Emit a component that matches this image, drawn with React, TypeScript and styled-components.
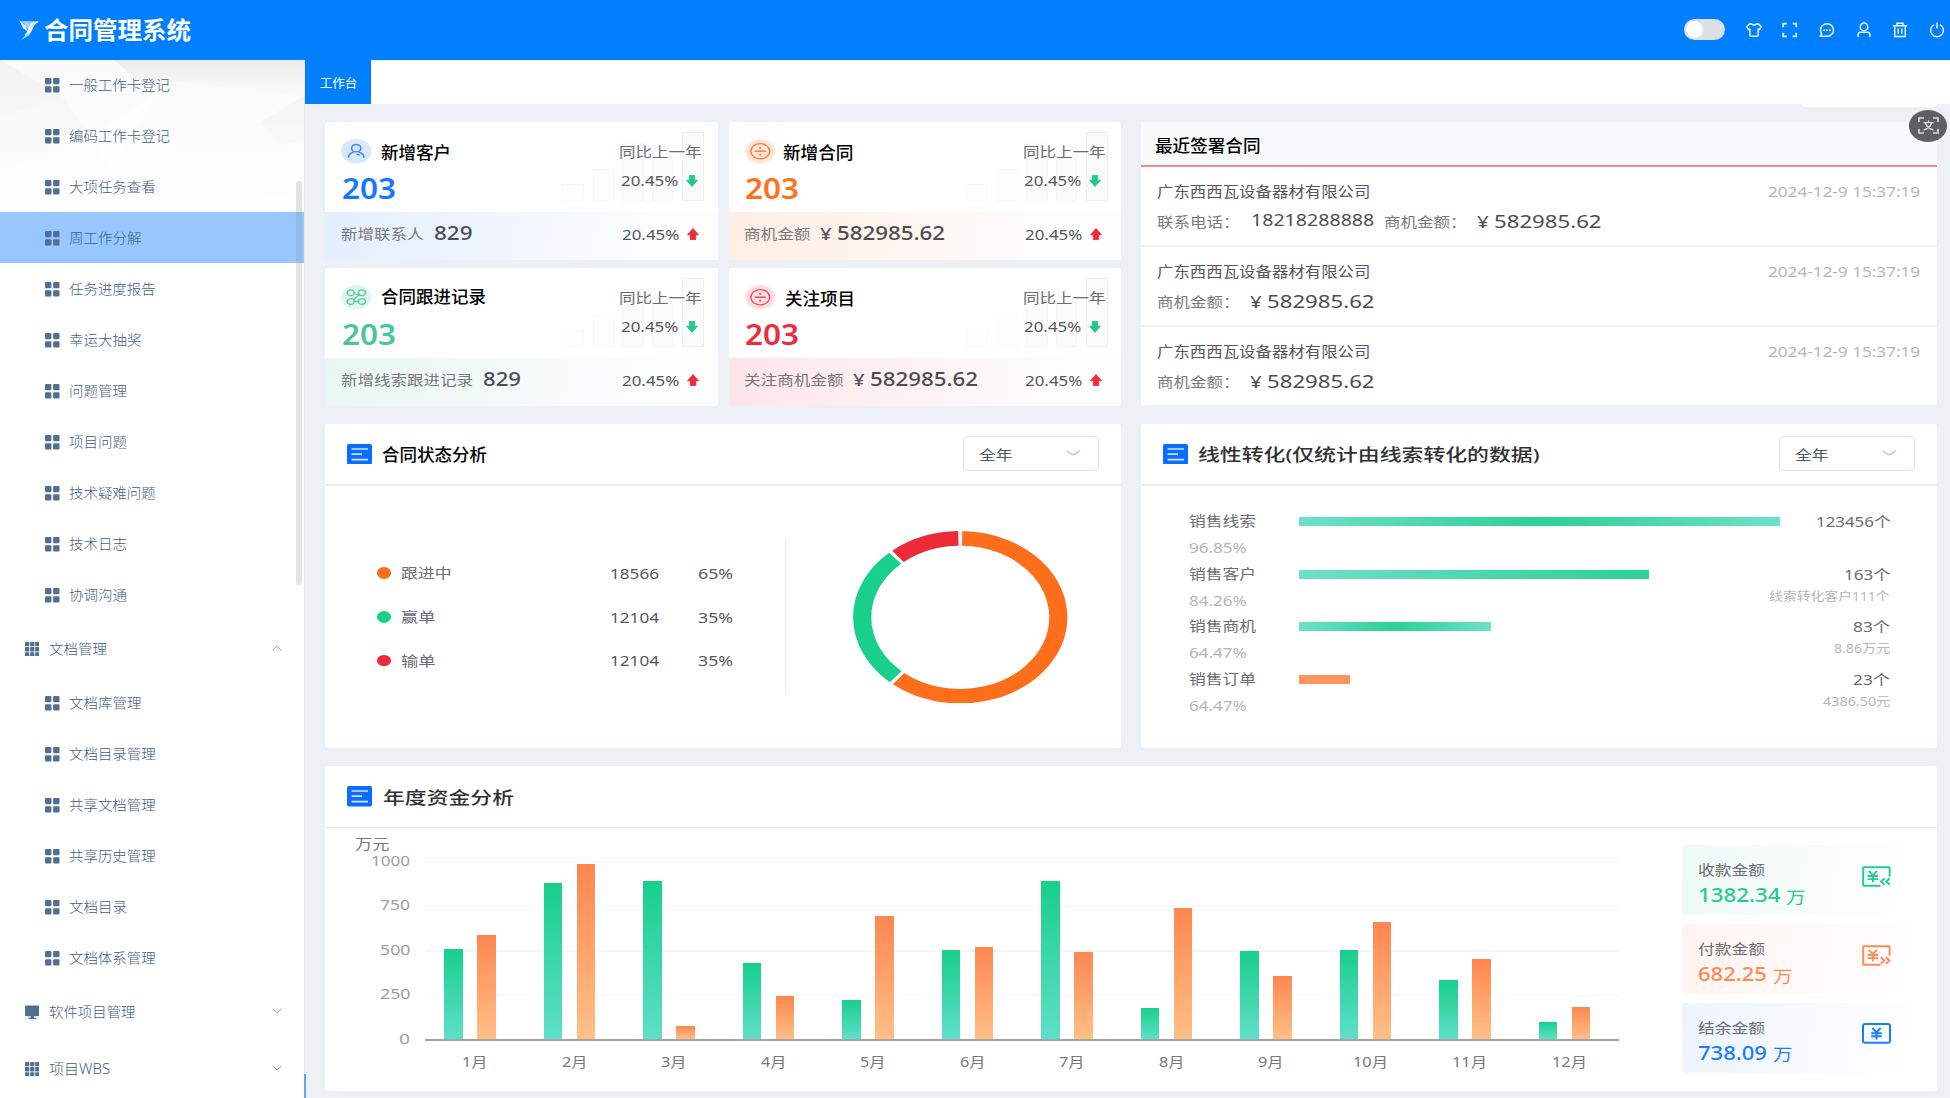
import React, { useLayoutEffect, useRef, useState } from "react";
import styled, { createGlobalStyle } from "styled-components";

const Global = createGlobalStyle`
  * { box-sizing: border-box; }
  html, body { margin: 0; padding: 0; }
  body {
    width: 1950px; height: 1098px; overflow: hidden; background: #edf0f5;
    font-family: "Noto Sans", "Noto Sans CJK SC", sans-serif;
  }
  svg { display: block; flex: none; }
`;

/* Text set to an exact column width: the glyphs are stretched horizontally. */
const FitBox = styled.span<{ $size: number; $color: string; $weight: number; $w: number; $left: number; $dy: number }>`
  display: block;
  flex: none;
  width: ${(p) => p.$w}px;
  height: ${(p) => p.$size}px;
  margin-left: ${(p) => p.$left}px;
  margin-top: ${(p) => p.$dy}px;
  font-size: ${(p) => p.$size}px;
  line-height: ${(p) => p.$size}px;
  font-weight: ${(p) => p.$weight};
  color: ${(p) => p.$color};
  white-space: nowrap;
`;
const FitInner = styled.span`
  display: inline-block;
  transform-origin: 0 50%;
  margin-left: -0.75px;
`;

type FitProps = { w: number; size?: number; color?: string; weight?: number; left?: number; dy?: number; children: string };

function Fit({ w, size = 15, color = "#606266", weight = 400, left = 0, dy = 0, children }: FitProps) {
  const ref = useRef<HTMLSpanElement>(null);
  const [scale, setScale] = useState(1);
  useLayoutEffect(() => {
    if (ref.current) setScale((w + 1.5) / ref.current.offsetWidth);
  }, [w, size, weight, children]);
  return (
    <FitBox $w={w} $size={size} $color={color} $weight={weight} $left={left} $dy={dy}>
      <FitInner ref={ref} style={{ transform: `scaleX(${scale})` }}>{children}</FitInner>
    </FitBox>
  );
}

/* ---------- header ---------- */
const Page = styled.div`
  width: 1950px;
  height: 1098px;
  display: flex;
  flex-direction: column;
  position: relative;
`;
const Header = styled.header`
  height: 60px;
  flex: none;
  background: #007fff;
  display: flex;
  align-items: center;
  justify-content: space-between;
  padding: 0 5px 1px 19px;
`;
const Brand = styled.div`
  display: flex;
  align-items: center;
  gap: 6px;
`;
const Tools = styled.div`
  display: flex;
  align-items: center;
  gap: 20.7px;
`;
const Toggle = styled.div`
  width: 41px;
  height: 21px;
  border-radius: 11px;
  background: #dcdfe6;
  padding: 2px;
`;
const Knob = styled.div`
  width: 17px;
  height: 17px;
  border-radius: 50%;
  background: #fff;
`;

const TopIcon = ({ children }: { children: React.ReactNode }) => (
  <svg width="16" height="16" viewBox="0 0 16 16" fill="none" stroke="#e9f4ff" strokeWidth="1.5">{children}</svg>
);

/* ---------- sidebar ---------- */
const Body = styled.div`
  display: flex;
  height: 1038px;
`;
const Sidebar = styled.aside`
  position: relative;
  width: 305px;
  flex: none;
  background: #fff;
  border-right: 1px solid #e4e7ec;
  overflow: hidden;
`;
const Facets = styled.svg`
  position: absolute;
  left: 0;
  top: 0;
`;
const Menu = styled.nav`
  position: relative;
  margin-top: -1px;
`;
const SubItem = styled.div<{ $active?: boolean }>`
  height: 51px;
  display: flex;
  align-items: center;
  gap: 10px;
  padding: 2px 0 0 45px;
  background: ${(p) => (p.$active ? "#96c7ff" : "transparent")};
`;
const GroupItem = styled.div`
  height: 57px;
  display: flex;
  align-items: center;
  gap: 10px;
  padding: 1px 22px 0 24.5px;
`;
const Spacer = styled.div`
  flex: 1;
`;
const ScrollThumb = styled.div`
  position: absolute;
  right: 2px;
  top: 121px;
  width: 6px;
  height: 404px;
  border-radius: 3px;
  background: rgba(144, 147, 153, 0.25);
`;

const Grid4 = () => (
  <svg width="14.5" height="14.5" viewBox="0 0 14.5 14.5" fill="#526f92">
    <rect width="6.4" height="6.2" rx="1" /><rect x="8.1" width="6.4" height="6.2" rx="1" />
    <rect y="8.2" width="6.4" height="6.3" rx="1" /><rect x="8.1" y="8.2" width="6.4" height="6.3" rx="1" />
  </svg>
);
const Grid9 = () => (
  <svg width="14.5" height="14.5" viewBox="0 0 14.5 14.5" fill="#526f92">
    {[0, 5.1, 10.2].map((y) => [0, 5.1, 10.2].map((x) => <rect key={`${x}-${y}`} x={x} y={y} width="4.3" height="4.3" rx=".5" />))}
  </svg>
);
const Monitor = () => (
  <svg width="14.5" height="14.5" viewBox="0 0 14.5 14.5" fill="#526f92">
    <rect y=".5" width="14.5" height="10.7" rx=".8" /><rect x="5.6" y="11" width="3.4" height="2" /><rect x="3.3" y="12.8" width="8" height="1.1" rx=".5" />
  </svg>
);
const Chevron = ({ up, w = 10, color = "#98a1ad" }: { up?: boolean; w?: number; color?: string }) => (
  <svg width={w} height="8" viewBox="0 0 10 8" preserveAspectRatio="none" fill="none" stroke={color} strokeWidth="1">
    <path d={up ? "M.6 5.4L5 1.2 9.4 5.4" : "M.6 .9L5 5.1l4.4-4.2"} />
  </svg>
);

const itemsA = ["一般工作卡登记", "编码工作卡登记", "大项任务查看", "周工作分解", "任务进度报告", "幸运大抽奖", "问题管理", "项目问题", "技术疑难问题", "技术日志", "协调沟通"];
const itemsB = ["文档库管理", "文档目录管理", "共享文档管理", "共享历史管理", "文档目录", "文档体系管理"];

const Sub = ({ label }: { label: string }) => (
  <SubItem $active={label === "周工作分解"}>
    <Grid4 />
    <Fit w={label.length * 14.3 - 0.6} size={14} color="#42607f" weight={300} dy={-1}>{label}</Fit>
  </SubItem>
);
const Group = ({ label, w, icon, up }: { label: string; w: number; icon: React.ReactNode; up?: boolean }) => (
  <GroupItem>
    {icon}
    <Fit w={w} size={14} color="#42607f" weight={300} left={0.7} dy={-0.6}>{label}</Fit>
    <Spacer />
    <Chevron up={up} />
  </GroupItem>
);

/* ---------- main ---------- */
const Main = styled.main`
  flex: 1;
  display: flex;
  flex-direction: column;
  position: relative;
`;
const TabBar = styled.div`
  height: 44px;
  flex: none;
  background: #fff;
  border-top: 1px solid #e3f0ff;
`;
const Tab = styled.div`
  width: 66px;
  height: 44px;
  margin-top: -1px;
  background: #007fff;
  display: flex;
  align-items: center;
  justify-content: center;
  padding: 4px 0 0 1.5px;
`;
const TabTail = styled.div`
  position: absolute;
  top: 44px;
  right: 13px;
  width: 135px;
  height: 2.5px;
  background: #fff;
  border-radius: 0 0 4px 4px;
`;
const EdgeMark = styled.div`
  position: absolute;
  left: -1px;
  bottom: 0;
  width: 2px;
  height: 24px;
  background: #5aa5f5;
`;
const Board = styled.div`
  padding: 18px 13px 0 20px;
  display: flex;
  flex-direction: column;
`;
const TopRow = styled.div`
  display: flex;
  gap: 20px;
  height: 283.5px;
`;
const Stats = styled.div`
  width: 796px;
  display: grid;
  grid-template-columns: 392.5px 392.5px;
  grid-template-rows: 137.5px 137.5px;
  column-gap: 11px;
  row-gap: 8.6px;
`;
const StatCard = styled.section`
  background: #fff;
  border-radius: 3px;
  overflow: hidden;
`;
const StatTop = styled.div`
  position: relative;
  height: 89.5px;
  padding: 0 16.5px 0 16px;
  display: flex;
  justify-content: space-between;
`;
const Ghost = styled.svg`
  position: absolute;
  left: 236px;
  top: 9px;
`;
const StatLeft = styled.div`
  display: flex;
  flex-direction: column;
  padding-top: 17px;
`;
const StatHead = styled.div`
  display: flex;
  align-items: center;
  height: 25px;
  margin-bottom: 10.2px;
`;
const StatRight = styled.div`
  position: relative;
  display: flex;
  flex-direction: column;
  padding-top: 22.8px;
  gap: 14.4px;
`;
const Rate = styled.div`
  display: flex;
  align-items: center;
  gap: 8px;
  padding-left: 1.5px;
`;
const StatBottom = styled.div<{ $tint: string }>`
  height: 48px;
  padding: 0 19px 3px 16.5px;
  display: flex;
  align-items: center;
  background: linear-gradient(100deg, ${(p) => p.$tint}, #fdfdfe 85%);
`;

const Arrow = ({ up }: { up?: boolean }) => (
  <svg width="12" height="12" viewBox="0 0 12 12" fill={up ? "#ee2b36" : "#23c886"} stroke={up ? "#ee2b36" : "#23c886"} strokeWidth=".8" strokeLinejoin="round">
    {up ? <path d="M6 .5L11.5 6.8H8.7v4.7H3.3V6.8H.5z" /> : <path d="M6 11.5L11.5 5.2H8.7V.5H3.3v4.7H.5z" />}
  </svg>
);

const Badge = ({ kind }: { kind: string }) => {
  const c: Record<string, [string, string]> = { user: ["#d8e8ff", "#3b86f7"], green: ["#e0f5ee", "#5ec9a2"], orange: ["#ffe6d8", "#ff7f33"], red: ["#ffdfe2", "#f0525d"] };
  const [bg, fg] = c[kind];
  return (
    <svg width="30.5" height="24.5" viewBox="0 0 24.5 24.5" preserveAspectRatio="none" fill="none" stroke={fg} strokeWidth="1.3">
      <circle cx="12.25" cy="12.25" r="12.2" fill={bg} stroke="none" />
      {kind === "user" && <><circle cx="12.2" cy="9.2" r="3.7" /><path d="M6 18.8a6.3 6.3 0 0 1 4.4-6M14 12.8a6.3 6.3 0 0 1 4.4 6M12.6 15.6q1.6-.8 2.6.9" /></>}
      {kind === "green" && <><circle cx="7.8" cy="7.8" r="2.9" /><circle cx="16.8" cy="7.8" r="2.9" /><circle cx="7.8" cy="16.6" r="2.9" /><circle cx="16.8" cy="16.6" r="2.9" /><path d="M10.6 8.4q2 2 4-.2M10.2 14.6L14.8 9.6M10.8 16.5h3.2" /></>}
      {(kind === "orange" || kind === "red") && <><circle cx="12.25" cy="12.25" r="7.6" /><path d="M7.8 12.25h9" /><circle cx="12.25" cy="8.7" r="1" fill={fg} stroke="none" /><circle cx="12.25" cy="15.8" r="1" fill={fg} stroke="none" /></>}
    </svg>
  );
};

type Stat = { kind: string; title: string; titleW: number; gap: number; dy: number; color: string; tint: string; sub: string; subW: number; val: string; valW: number; money?: boolean };
const stats: Stat[] = [
  { kind: "user", title: "新增客户", titleW: 68.5, gap: 10, dy: 1, color: "#1677ff", tint: "#e3eeff", sub: "新增联系人", subW: 81, val: "829", valW: 37.5 },
  { kind: "orange", title: "新增合同", titleW: 69, gap: 9, dy: 1, color: "#ff711f", tint: "#ffeee3", sub: "商机金额", subW: 65, val: "582985.62", valW: 106.5, money: true },
  { kind: "green", title: "合同跟进记录", titleW: 103.5, gap: 10, dy: -1.5, color: "#49c79b", tint: "#e8f7f2", sub: "新增线索跟进记录", subW: 130.5, val: "829", valW: 37 },
  { kind: "red", title: "关注项目", titleW: 68.5, gap: 11, dy: 1.5, color: "#ee2c3c", tint: "#fde5e8", sub: "关注商机金额", subW: 98, val: "582985.62", valW: 106.5, money: true },
];

const StatView = ({ s }: { s: Stat }) => (
  <StatCard>
    <StatTop>
      <Ghost width="145" height="72" viewBox="0 0 145 72" fill="#fbfbfc" stroke="#f6f6f8">
        <rect x="1.5" y="53.5" width="21" height="16" fill="#fefefe" stroke="#fafafb" /><rect x="32.5" y="38.5" width="20" height="31" fill="#fefefe" stroke="#f8f8f9" />
        <rect x="61.5" y="12.5" width="21" height="57" /><rect x="91.5" y="25.5" width="20" height="44" /><rect x="121.5" y="1.5" width="21" height="68" stroke="#efeff0" />
      </Ghost>
      <StatLeft>
        <StatHead>
          <Badge kind={s.kind} />
          <Fit w={s.titleW} size={17} color="#000" weight={500} left={s.gap} dy={s.dy}>{s.title}</Fit>
        </StatHead>
        <Fit w={52.5} size={28} color={s.color} weight={600} left={1.5}>203</Fit>
      </StatLeft>
      <StatRight>
        <Fit w={81} size={14} color="#6b6d72">同比上一年</Fit>
        <Rate><Fit w={56} size={15} color="#55575b">20.45%</Fit><Arrow /></Rate>
      </StatRight>
    </StatTop>
    <StatBottom $tint={s.tint}>
      <Fit w={s.subW} size={14} color="#77797d">{s.sub}</Fit>
      {s.money && <Fit w={10} size={16} color="#55575b" weight={500} left={11}>¥</Fit>}
      <Fit w={s.valW} size={19} color="#4c4e52" weight={500} left={s.money ? 7 : 12} dy={-1}>{s.val}</Fit>
      <Spacer />
      <Rate><Fit w={56} size={15} color="#55575b">20.45%</Fit><Arrow up /></Rate>
    </StatBottom>
  </StatCard>
);

const Recent = styled.section`
  flex: 1;
  height: 283px;
  background: #fff;
  border-radius: 3px;
`;
const RecentHead = styled.div`
  height: 45px;
  background: #f8f9fb;
  border-bottom: 2px solid #f38a8f;
  padding: 3px 0 0 14.5px;
  display: flex;
  align-items: center;
`;
const Deal = styled.div`
  height: 80px;
  padding: 16.4px 17px 0 16.5px;
  border-bottom: 2px solid #f1f1f3;
  &:last-child { border-bottom: 0; }
`;
const DealLine = styled.div<{ $top?: number }>`
  display: flex;
  align-items: center;
  height: 16px;
  margin-top: ${(p) => p.$top ?? 0}px;
`;

const DealView = ({ phone }: { phone?: boolean }) => (
  <Deal>
    <DealLine>
      <Fit w={212.5} size={14.5} color="#55575b">广东西西瓦设备器材有限公司</Fit>
      <Spacer />
      <Fit w={151} size={14.5} color="#b4b6bc">2024-12-9 15:37:19</Fit>
    </DealLine>
    <DealLine $top={14.4}>
      {phone && (
        <>
          <Fit w={81} size={14} color="#77797d">联系电话：</Fit>
          <Fit w={122} size={16.5} color="#4c4e52" left={13} dy={-3}>18218288888</Fit>
          <Fit w={81} size={14} color="#77797d" left={11.5}>商机金额：</Fit>
        </>
      )}
      {!phone && <Fit w={81} size={14} color="#77797d">商机金额：</Fit>}
      <Fit w={10} size={16} color="#4c4e52" left={12}>¥</Fit>
      <Fit w={106.5} size={18.5} color="#4c4e52" left={7} dy={-2}>582985.62</Fit>
    </DealLine>
  </Deal>
);

const Row2 = styled.div`
  display: flex;
  gap: 20px;
  margin-top: 18px;
  height: 324.5px;
`;
const Panel = styled.section<{ $w?: number }>`
  width: ${(p) => (p.$w ? `${p.$w}px` : "auto")};
  flex: ${(p) => (p.$w ? "none" : 1)};
  background: #fff;
  border-radius: 3px;
`;
const PanelHead = styled.div`
  height: 62.5px;
  border-bottom: 2px solid #efeff1;
  display: flex;
  align-items: center;
  padding: 0 22px 0 21.5px;
`;
const Select = styled.div`
  width: 136.5px;
  height: 35px;
  border: 1.5px solid #e2e3ea;
  border-radius: 4px;
  display: flex;
  align-items: center;
  justify-content: space-between;
  padding: 0 17px 0 16px;
`;
const ListIcon = () => (
  <svg width="25" height="20.5" viewBox="0 0 25 20.5" stroke="#cfe5ff" strokeWidth="1.7">
    <rect width="25" height="20.5" rx="2" fill="#0b6dff" stroke="none" />
    <path d="M4.5 5h16.5M4.5 10.2h10.5M4.5 15.6h16.5" />
  </svg>
);
const YearSelect = () => (
  <Select>
    <Fit w={32} size={14} color="#55575b" dy={3}>全年</Fit>
    <Chevron w={15} color="#bfc1c8" />
  </Select>
);

const StatusBody = styled.div`
  display: flex;
  align-items: flex-start;
`;
const Legend = styled.div`
  width: 461px;
  height: 153px;
  margin-top: 54px;
  border-right: 1.5px solid #e6e7ea;
  padding: 23px 52px 0 52px;
`;
const LegendRow = styled.div`
  display: flex;
  align-items: center;
  height: 20px;
  margin-bottom: 23.8px;
`;
const Dot = styled.span<{ $c: string }>`
  width: 14px;
  height: 11.5px;
  border-radius: 50%;
  background: ${(p) => p.$c};
  margin-right: 10.5px;
`;
const DonutWrap = styled.div`
  margin: 44.7px 0 0 67px;
`;

const Donut = () => {
  const R = 78.9;
  const pt = (a: number) => {
    const t = ((a - 90) * Math.PI) / 180;
    return `${86.3 + R * Math.cos(t)} ${86.3 + R * Math.sin(t)}`;
  };
  const arc = (a: number, b: number, c: string) => (
    <path d={`M${pt(a)}A${R} ${R} 0 ${b - a > 180 ? 1 : 0} 1 ${pt(b)}`} stroke={c} strokeWidth="14.6" fill="none" />
  );
  return (
    <svg width="214.5" height="172.6" viewBox="0 0 172.6 172.6" preserveAspectRatio="none">
      {arc(1.1, 219, "#ff6f1b")}
      {arc(221.2, 318.4, "#18cf8c")}
      {arc(320.6, 358.9, "#ec2a38")}
    </svg>
  );
};

const legend = [
  { c: "#ff6f1b", t: "跟进中", w: 49, n: "18566", p: "65%" },
  { c: "#18cf8c", t: "赢单", w: 33, n: "12104", p: "35%" },
  { c: "#ec2a38", t: "输单", w: 33, n: "12104", p: "35%" },
];

const Funnel = styled.div`
  padding: 28px 47.5px 0 49px;
`;
const FunnelRow = styled.div`
  height: 52.5px;
  display: grid;
  grid-template-columns: 109px 1fr auto;
`;
const FunnelCol = styled.div<{ $gap: number }>`
  display: flex;
  flex-direction: column;
  gap: ${(p) => p.$gap}px;
  align-items: ${(p) => (p.$gap < 12 ? "flex-end" : "flex-start")};
`;
const FunnelBar = styled.div<{ $fill: string }>`
  height: 9.4px;
  margin-top: 3px;
  background: ${(p) => p.$fill};
`;
const g2 = "linear-gradient(90deg, #6fe0c8, #2bd195 50%, #6fe0c8)";
const funnel = [
  { t: "销售线索", w: 481, p: "96.85%", fill: g2, v: "123456个", vw: 73, s: "", sw: 0 },
  { t: "销售客户", w: 350, p: "84.26%", fill: "linear-gradient(90deg, #6fe0c8, #2bd195)", v: "163个", vw: 44.5, s: "线索转化客户111个", sw: 119.5 },
  { t: "销售商机", w: 192, p: "64.47%", fill: g2, v: "83个", vw: 35.5, s: "8.86万元", sw: 55 },
  { t: "销售订单", w: 50.7, p: "64.47%", fill: "#ff9461", v: "23个", vw: 35.5, s: "4386.50元", sw: 65.5 },
];

const Annual = styled.section`
  height: 324.5px;
  margin-top: 18px;
  background: #fff;
  border-radius: 3px;
`;
const AnnualHead = styled.div`
  height: 62px;
  border-bottom: 1.5px solid #e9e9eb;
  display: flex;
  align-items: center;
  padding-left: 22px;
`;
const AnnualBody = styled.div`
  display: flex;
`;
const Axis = styled.div`
  width: 100px;
  padding: 9px 15.5px 0 31px;
  display: flex;
  flex-direction: column;
`;
const Ticks = styled.div`
  display: flex;
  flex-direction: column;
  align-items: flex-end;
  margin-top: 3px;
  gap: 30.4px;
`;
const ChartCol = styled.div`
  width: 1194px;
  padding-top: 32.5px;
`;
const Plot = styled.div`
  height: 180px;
  display: grid;
  grid-template-columns: repeat(12, 1fr);
  border-bottom: 2px solid #a2a3a6;
  background: repeating-linear-gradient(#f4f5f7 0 1.5px, transparent 1.5px 44.6px);
`;
const Month = styled.div`
  display: flex;
  align-items: flex-end;
  gap: 14.3px;
  padding-left: 19.4px;
`;
const Bar = styled.div<{ $fill: string }>`
  width: 18.5px;
  background: ${(p) => p.$fill};
`;
const Months = styled.div`
  display: grid;
  grid-template-columns: repeat(12, 1fr);
  justify-items: center;
  margin-top: 14.5px;
`;
const months: [number, number][] = [[90, 104], [156, 174.3], [158, 12.7], [75.8, 43], [38.8, 122.3], [88.5, 91.3], [157.4, 87], [30.4, 131], [87.8, 62.3], [88.4, 116.4], [59, 79.7], [16.4, 31.3]];

const Totals = styled.div`
  margin: 17px 0 0 63px;
  display: flex;
  flex-direction: column;
  gap: 8.8px;
`;
const Total = styled.div<{ $tint: string }>`
  width: 232.5px;
  height: 70px;
  border-radius: 4px;
  padding: 18.3px 23.5px 0 17px;
  display: flex;
  justify-content: space-between;
  background: linear-gradient(100deg, ${(p) => p.$tint}, #fff);
`;
const TotalValue = styled.div`
  display: flex;
  align-items: center;
  margin-top: 9px;
`;
const MoneySvg = styled.svg`
  margin-top: 2.5px;
`;
const MoneyIcon = ({ c, kind }: { c: string; kind: number }) => (
  <MoneySvg width="29" height="21" viewBox="0 0 29 21" fill="none" stroke={c} strokeWidth="2">
    {kind === 2 ? <rect x="1" y="1" width="27" height="18.8" rx="2" /> : <path d="M18.5 19.8H2.5A1 1 0 0 1 1.2 18.6V2.3A1 1 0 0 1 2.5 1.2H26.3A1 1 0 0 1 27.6 2.3V10.5" />}
    <g transform={kind === 2 ? "translate(9.2 5)" : "translate(5.6 4.8)"}><path d="M1.2 0L5.3 4.4 9.4 0M5.3 4.4V11.4M0 5.2H10.6M0 8.3H10.6" strokeWidth="1.9" /></g>
    {kind === 0 && <path d="M22.6 12.3L19 15.6l3.6 3.2M27.8 12.3l-3.6 3.3 3.6 3.2" strokeWidth="1.9" />}
    {kind === 1 && <path d="M18.8 12.3l3.6 3.3-3.6 3.2M23.8 12.3l3.6 3.3-3.6 3.2" strokeWidth="1.9" />}
  </MoneySvg>
);
const totals = [
  { t: "收款金额", v: "1382.34", w: 80.5, c: "#24cc92", tint: "#eef9f6" },
  { t: "付款金额", v: "682.25", w: 68, c: "#ff8a55", tint: "#fff4f0" },
  { t: "结余金额", v: "738.09", w: 68, c: "#1a7dff", tint: "#eef4ff" },
];

const Floating = styled.div`
  position: absolute;
  right: 3px;
  top: 110px;
  width: 38px;
  height: 31.5px;
  border-radius: 50%;
  background: #5e5f62;
  display: flex;
  align-items: center;
  justify-content: center;
`;

export default function App() {
  return (
    <Page>
      <Global />
      <Header>
        <Brand>
          <svg width="20" height="22" viewBox="0 0 20 22">
            <path d="M0 .8L7.5 7.2 8.5 12.5 4.2 9.2Z" fill="#d9eeff" />
            <path d="M1.5 2.2L19.6 2.3C14 5.2 14.2 10.5 11.6 14.4 9.4 17.6 5.4 18.2 2 21.6 5 16.8 8.4 15.6 8.6 11 8.6 7 5 4.2 1.5 2.2Z" fill="#9fd3ff" />
            <path d="M19.2 2.6C13 4.8 13.4 11 8.6 14.8M15 3C10.4 5.6 11.6 10 6.2 16.4" stroke="#fff" strokeWidth="1.3" fill="none" />
          </svg>
          <Fit w={145.5} size={24} color="#fff" weight={700}>合同管理系统</Fit>
        </Brand>
        <Tools>
          <Toggle><Knob /></Toggle>
          <TopIcon><path strokeLinejoin="round" d="M5.4 1.8Q8 4.4 10.6 1.8L12.4 1.9 15.3 4.8 13.4 7.6 12.1 6.9V13.2Q12.1 14.2 11 14.2H5Q3.9 14.2 3.9 13.2V6.9L2.6 7.6.7 4.8 3.6 1.9Z" /></TopIcon>
          <TopIcon><path strokeWidth="1.8" d="M1.2 5.2V1.7H4.8M10.6 1.7h3.6V5.2M14.2 10.8v3.6H10.6M4.8 14.4H1.2V10.8" /></TopIcon>
          <TopIcon><path d="M1.2 14.3H8A6.5 6.3 0 1 0 1.5 8.4Q1.6 10.4 2.6 11.6Z" strokeLinejoin="round" /><path d="M4.3 8.1h1.6M7.3 8.1h1.6M10.3 8.1h1.6" strokeWidth="1.8" /></TopIcon>
          <TopIcon><circle cx="8" cy="4.9" r="3.8" /><path d="M2 14.9V13Q2 10.3 5 10.3H11Q14 10.3 14 13V14.9" /></TopIcon>
          <TopIcon><path d="M.9 3.7H15.1M5 3.4V1.3H11V3.4M2.7 3.9V14.4H13.3V3.9M6.2 6.4v5.4M9.8 6.4v5.4" /></TopIcon>
          <TopIcon><path d="M5.2 2.6A6.4 6.4 0 1 0 10.8 2.6M8 .6V6.6" /></TopIcon>
        </Tools>
      </Header>
      <Body>
        <Sidebar>
          <Facets width="304" height="170" viewBox="0 0 304 170">
            <defs>
              <linearGradient id="fade" x1="0" y1="0" x2="0" y2="1"><stop offset="0" stopColor="#fff" stopOpacity="0" /><stop offset="1" stopColor="#fff" /></linearGradient>
              <linearGradient id="top" x1="0" y1="0" x2="0" y2="1"><stop offset="0" stopColor="#eaeaea" /><stop offset=".8" stopColor="#f8f8f8" /></linearGradient>
            </defs>
            <rect width="304" height="170" fill="#f9f9f9" />
            <path d="M114 0H304V36L180 22 130 22Z" fill="url(#top)" />
            <path d="M0 0L62 36 0 58Z" fill="#f3f3f3" />
            <path d="M0 0H114L140 22 62 36Z" fill="#fafafa" />
            <path d="M62 36L140 22 304 36 260 62 110 56Z" fill="#fafafa" />
            <path d="M0 58L62 36 90 76 0 110Z" fill="#f5f5f5" />
            <path d="M90 76L160 32 110 110Z" fill="#fcfcfc" />
            <path d="M304 36L260 62 240 95 304 80Z" fill="#f3f3f3" />
            <path d="M110 110L260 62 304 110V140Z" fill="#f8f8f8" />
            <rect width="304" height="170" fill="url(#fade)" />
          </Facets>
          <Menu>
            {itemsA.map((t) => <Sub key={t} label={t} />)}
            <Group label="文档管理" w={56.5} icon={<Grid9 />} up />
            {itemsB.map((t) => <Sub key={t} label={t} />)}
            <Group label="软件项目管理" w={85} icon={<Monitor />} />
            <Group label="项目WBS" w={59.5} icon={<Grid9 />} />
          </Menu>
          <ScrollThumb />
        </Sidebar>
        <Main>
          <TabBar><Tab><Fit w={36.5} size={12.5} color="#fff">工作台</Fit></Tab></TabBar>
          <TabTail />
          <EdgeMark />
          <Board>
            <TopRow>
              <Stats>{stats.map((s) => <StatView key={s.title} s={s} />)}</Stats>
              <Recent>
                <RecentHead><Fit w={104} size={17} color="#000" weight={500}>最近签署合同</Fit></RecentHead>
                <DealView phone />
                <DealView />
                <DealView />
              </Recent>
            </TopRow>
            <Row2>
              <Panel $w={796}>
                <PanelHead>
                  <ListIcon />
                  <Fit w={103.5} size={17} color="#000" weight={500} left={11} dy={1}>合同状态分析</Fit>
                  <Spacer />
                  <YearSelect />
                </PanelHead>
                <StatusBody>
                  <Legend>
                    {legend.map((l) => (
                      <LegendRow key={l.t}>
                        <Dot $c={l.c} />
                        <Fit w={l.w} size={14} color="#6b6d72">{l.t}</Fit>
                        <Spacer />
                        <Fit w={47} size={14.5} color="#55575b">{l.n}</Fit>
                        <Fit w={34} size={14.5} color="#55575b" left={41}>{l.p}</Fit>
                      </LegendRow>
                    ))}
                  </Legend>
                  <DonutWrap><Donut /></DonutWrap>
                </StatusBody>
              </Panel>
              <Panel>
                <PanelHead>
                  <ListIcon />
                  <Fit w={340.5} size={17} color="#303133" weight={500} left={11} dy={2}>线性转化(仅统计由线索转化的数据)</Fit>
                  <Spacer />
                  <YearSelect />
                </PanelHead>
                <Funnel>
                  {funnel.map((f) => (
                    <FunnelRow key={f.t}>
                      <FunnelCol $gap={12}>
                        <Fit w={65.5} size={14} color="#6b6d72">{f.t}</Fit>
                        <Fit w={56} size={14.5} color="#b4b6bc">{f.p}</Fit>
                      </FunnelCol>
                      <div><FunnelBar $fill={f.fill} style={{ width: f.w }} /></div>
                      <FunnelCol $gap={9.5}>
                        <Fit w={f.vw} size={14.5} color="#6b6d72">{f.v}</Fit>
                        {f.s && <Fit w={f.sw} size={12} color="#b4b6bc">{f.s}</Fit>}
                      </FunnelCol>
                    </FunnelRow>
                  ))}
                </Funnel>
              </Panel>
            </Row2>
            <Annual>
              <AnnualHead>
                <ListIcon />
                <Fit w={129.5} size={17} color="#303133" weight={500} left={11.5} dy={2}>年度资金分析</Fit>
              </AnnualHead>
              <AnnualBody>
                <Axis>
                  <Fit w={33} size={14} color="#77797d">万元</Fit>
                  <Ticks>
                    <Fit w={37.5} size={14} color="#9c9ea3">1000</Fit>
                    <Fit w={28.5} size={14} color="#9c9ea3">750</Fit>
                    <Fit w={29} size={14} color="#9c9ea3">500</Fit>
                    <Fit w={29} size={14} color="#9c9ea3">250</Fit>
                    <Fit w={9.5} size={14} color="#9c9ea3">0</Fit>
                  </Ticks>
                </Axis>
                <ChartCol>
                  <Plot>
                    {months.map(([a, b], i) => (
                      <Month key={i}>
                        <Bar $fill="linear-gradient(#18cf8a, #5fdfc8)" style={{ height: a }} />
                        <Bar $fill="linear-gradient(#ff8650, #ffc086)" style={{ height: b }} />
                      </Month>
                    ))}
                  </Plot>
                  <Months>
                    {months.map((_, i) => <Fit key={i} w={i > 8 ? 33.5 : 24} size={14} color="#77797d">{`${i + 1}月`}</Fit>)}
                  </Months>
                </ChartCol>
                <Totals>
                  {totals.map((t, i) => (
                    <Total key={t.t} $tint={t.tint}>
                      <div>
                        <Fit w={65.5} size={14} color="#6b6d72">{t.t}</Fit>
                        <TotalValue>
                          <Fit w={t.w} size={19} color={t.c} weight={500}>{t.v}</Fit>
                          <Fit w={18} size={16} color={t.c} left={7} dy={2}>万</Fit>
                        </TotalValue>
                      </div>
                      <MoneyIcon c={t.c} kind={i} />
                    </Total>
                  ))}
                </Totals>
              </AnnualBody>
            </Annual>
          </Board>
        </Main>
      </Body>
      <Floating>
        <svg width="21" height="17" viewBox="0 0 21 17" fill="none" stroke="#d9dadc" strokeWidth="1.7">
          <path d="M1 5V1H6M15 1h5V5M20 12v4H15M6 16H1V12" />
          <path d="M5.5 5.6H15.5M10.5 3.4V5.6M7.4 6Q9 11 15.4 13M13.6 6Q12 11 5.6 13" strokeWidth="1.4" />
        </svg>
      </Floating>
    </Page>
  );
}
